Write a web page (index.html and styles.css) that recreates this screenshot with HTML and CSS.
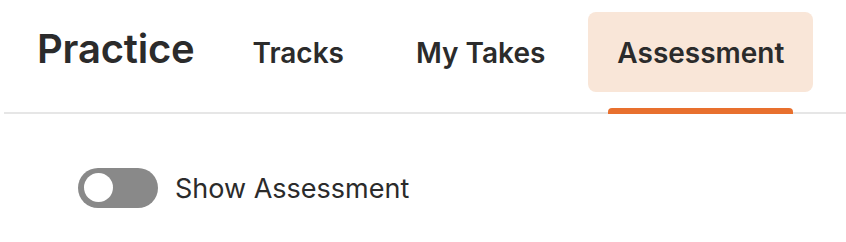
FILE: index.html
```html
<!DOCTYPE html>
<html>
<head>
<meta charset="utf-8">
<link rel="stylesheet" href="styles.css">
</head>
<body>
<header class="topbar">
  <h1 class="title">Practice</h1>
  <nav class="tabs">
    <div class="tab">Tracks</div>
    <div class="tab">My Takes</div>
    <div class="tab active">Assessment</div>
  </nav>
</header>
<main class="content">
  <label class="toggle-row">
    <span class="switch"><span class="knob"></span></span>
    <span class="toggle-label">Show Assessment</span>
  </label>
</main>
</body>
</html>
```
FILE: styles.css
```css
* { box-sizing: border-box; }
html, body { margin: 0; padding: 0; background: #fff; }
body {
  font-family: Inter, "Noto Sans", sans-serif;
  color: #2b2b2b;
  width: 846px;
  height: 242px;
  overflow: hidden;
}
.topbar {
  display: flex;
  align-items: flex-start;
  margin-left: 4px;
  border-bottom: 2px solid #e6e6e6;
  height: 114px;
}
.title {
  margin: 26px 0 0 33px;
  font-size: 40px;
  font-weight: 600;
  line-height: 46px;
  letter-spacing: -0.2px;
}
.tabs {
  display: flex;
  margin-left: 29px;
  margin-top: 12px;
}
.tab {
  position: relative;
  height: 80px;
  padding: 2px 29px 0;
  display: flex;
  align-items: center;
  font-size: 28px;
  font-weight: 600;
  border-radius: 8px;
}
.tab + .tab { margin-left: 14px; }
.tab.active {
  background: #f9e6d8;
}
.tab.active::after {
  content: "";
  position: absolute;
  left: 20px;
  right: 20px;
  top: 96px;
  height: 6px;
  background: #e8702e;
  border-radius: 4px 4px 0 0;
}
.content {
  padding: 54px 0 0 78px;
}
.toggle-row {
  display: flex;
  align-items: center;
  gap: 17px;
}
.switch {
  width: 80px;
  height: 40px;
  border-radius: 20px;
  background: #898989;
  padding: 5px 6px;
  display: flex;
}
.knob {
  width: 29px;
  height: 29px;
  border-radius: 50%;
  background: #fff;
}
.toggle-label {
  font-size: 27px;
  font-weight: 400;
}
```
